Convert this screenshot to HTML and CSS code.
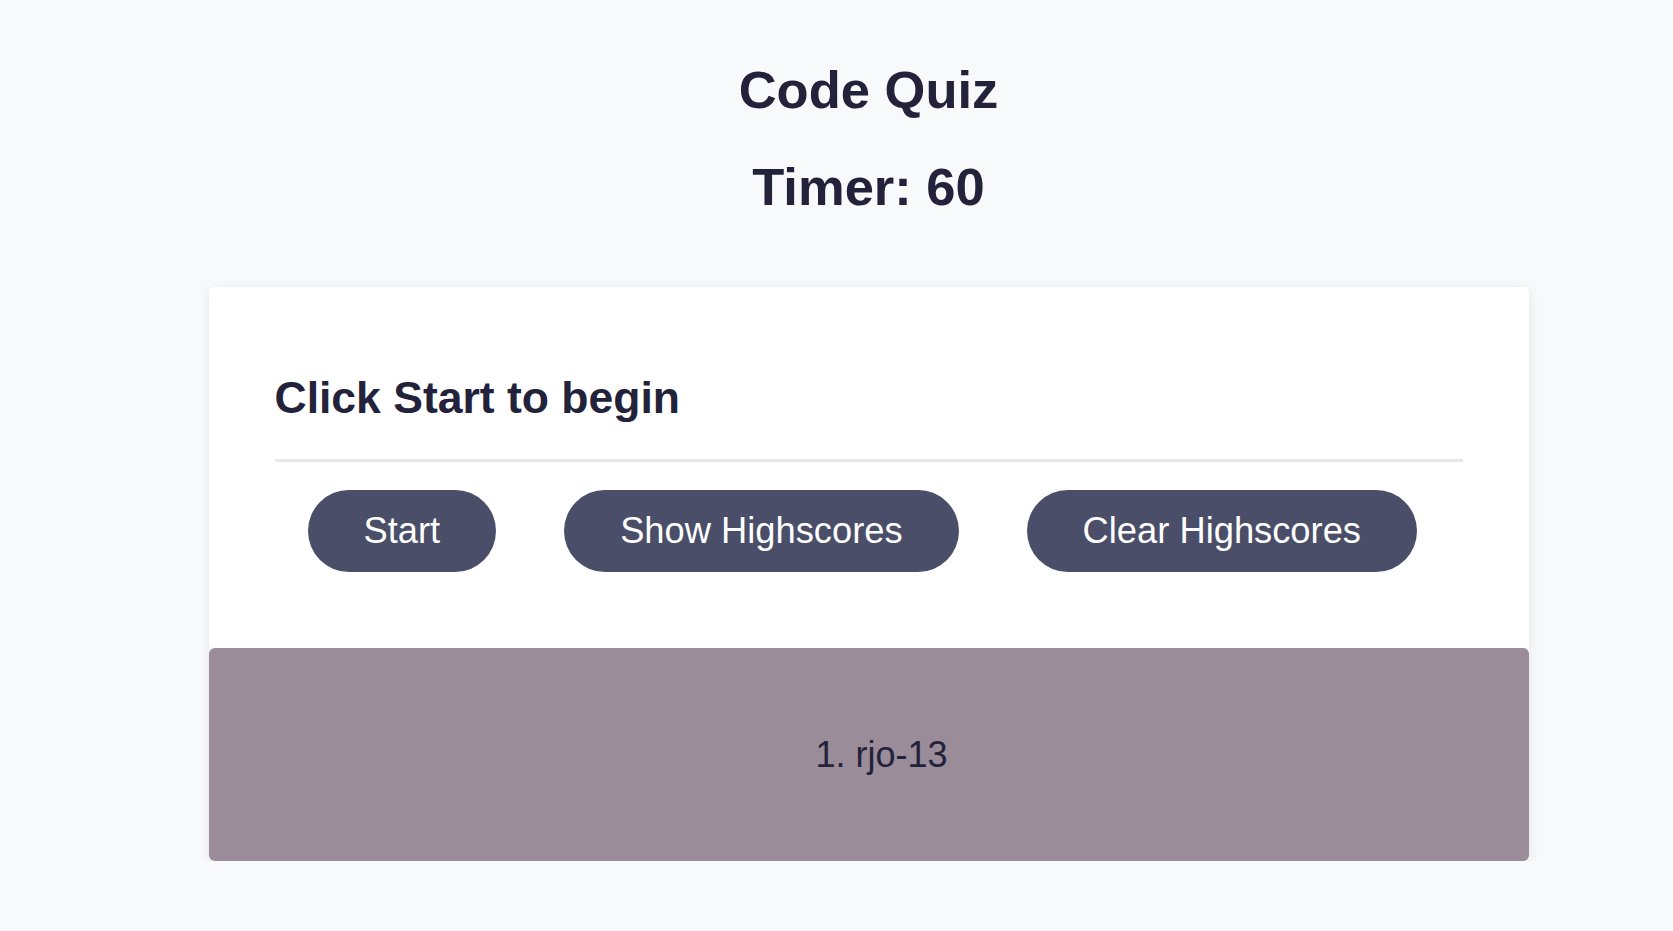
FILE: index.html
```html
<!DOCTYPE html>
<html lang="en">
<head>
<meta charset="utf-8">
<title>Code Quiz</title>
<link rel="stylesheet" href="styles.css">
</head>
<body>
<header class="header">
  <h1 class="title">Code Quiz</h1>
  <h2 class="timer">Timer: 60</h2>
</header>
<main class="quiz">
  <section class="card">
    <h3 class="prompt">Click Start to begin</h3>
    <div class="actions">
      <button class="btn">Start</button>
      <button class="btn">Show Highscores</button>
      <button class="btn">Clear Highscores</button>
    </div>
  </section>
  <section class="scores">
    <ol class="score-list">
      <li>rjo-13</li>
    </ol>
  </section>
</main>
</body>
</html>
```

FILE: styles.css
```css
* { box-sizing: border-box; }

body {
  margin: 0;
  padding: 0 0 0 64px;
  background: #f8f9fb;
  color: #22223b;
  font-family: "Liberation Sans", Arial, sans-serif;
}

.header {
  text-align: center;
  padding-top: 59px;
}

.title,
.timer {
  margin: 0;
  font-size: 52.5px;
  font-weight: 700;
  line-height: normal;
}

.timer {
  margin-top: 36px;
}

.quiz {
  width: 1320px;
  margin: 70px auto 0;
  border-radius: 6px;
  box-shadow: 0 2px 12px rgba(0, 0, 0, 0.08);
}

.card {
  background: #ffffff;
  border-radius: 6px;
  padding: 86px 66px 76px;
}

.prompt {
  margin: 0;
  font-size: 44.5px;
  font-weight: 700;
  line-height: normal;
  padding-bottom: 36px;
  border-bottom: 3px solid #e8e8ea;
}

.actions {
  display: flex;
  gap: 68px;
  padding-left: 33px;
  margin-top: 28px;
}

.btn {
  font-family: "Liberation Sans", Arial, sans-serif;
  font-size: 36.3px;
  line-height: normal;
  color: #ffffff;
  background: #4a4e69;
  border: none;
  border-radius: 999px;
  padding: 20px 56px;
  cursor: pointer;
}

.scores {
  background: #9a8c98;
  border-radius: 6px;
  height: 213px;
  display: flex;
  align-items: center;
  justify-content: center;
}

.score-list {
  margin: 0;
  padding: 0 0 0 26px;
  list-style-position: inside;
  text-align: center;
  font-size: 36px;
  color: #22223b;
}
```
